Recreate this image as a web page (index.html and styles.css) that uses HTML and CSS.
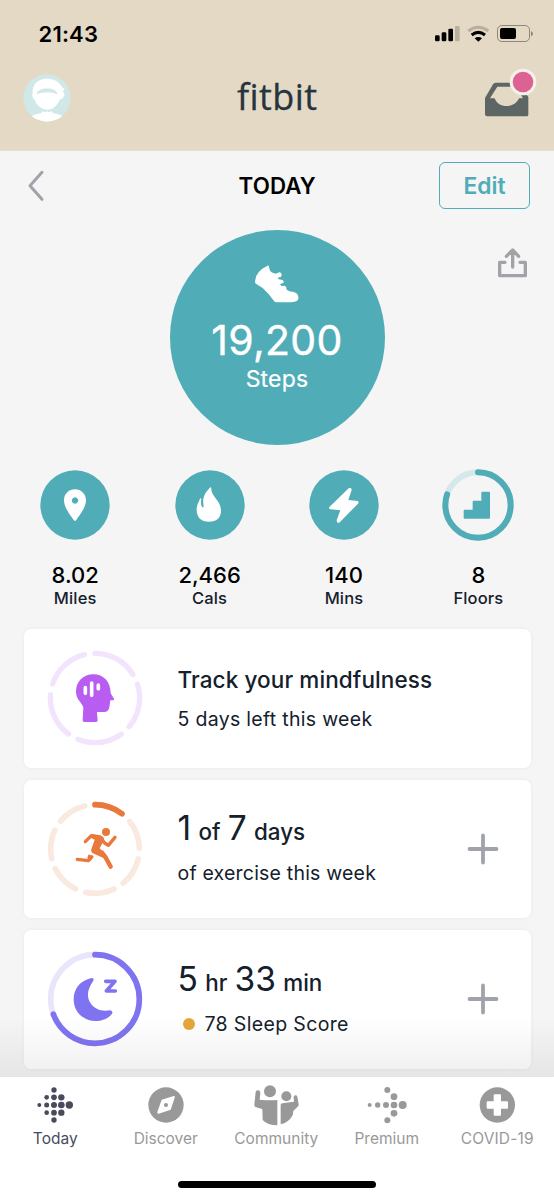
FILE: index.html
```
<!DOCTYPE html>
<html lang="en">
<head>
<meta charset="utf-8">
<title>Fitbit Today</title>
<link rel="stylesheet" href="styles.css">
</head>
<body>
<div class="app">
  <header class="header">
    <div class="status">
      <span class="clock">21:43</span>
      <svg class="status-icons" viewBox="471 66 300 69">
        <rect x="474" y="106" width="14" height="18" rx="4"/>
        <rect x="494" y="97" width="14" height="27" rx="4"/>
        <rect x="514" y="86" width="14" height="38" rx="4"/>
        <rect x="534" y="78" width="14" height="46" rx="4" fill="#b9af9e"/>
        <g fill="none" stroke-width="9">
          <path d="M574 93Q604 70 634 93" stroke="#b9af9e"/>
          <path d="M584 105Q604 89 624 105" stroke="#000"/>
        </g>
        <path d="M593 115Q604 107 615 115L604 125Z"/>
        <rect x="661.500" y="76.500" width="96" height="48" rx="13" fill="none" stroke="#8e8678" stroke-width="3"/>
        <rect x="669" y="84" width="48" height="33" rx="6"/>
        <path d="M762 93Q768 96 768 101Q768 106 762 109Z" fill="#8e8678"/>
      </svg>
    </div>
    <div class="brandbar">
      <svg class="avatar" viewBox="70 220 144 144">
        <defs><clipPath id="disc"><circle cx="142" cy="292" r="71"/></clipPath></defs>
        <circle cx="142" cy="292" r="71" fill="#d1e8e9"/>
        <g clip-path="url(#disc)">
          <path fill="#fff" d="M99 278C97 250 115 234 142 234C163 234 178 242 187 260L194 264L190 273L195 282L189 293L180 297C174 313 160 327 142 327C126 327 111 314 105 298C98 293 97 284 99 278Z"/>
          <path fill="#d1e8e9" d="M111 281C111 258 173 258 173 281C155 273 130 273 111 281Z"/>
          <path fill="#fff" d="M95 347Q108 339 124 338L128 331L135 335L142 332L149 335L156 331L160 338Q177 339 190 347L180 370H104Z"/>
        </g>
      </svg>
      <span class="brand">fitbit</span>
      <svg class="inbox" viewBox="621 201 156 147">
        <path fill="#5d6664" fill-rule="evenodd" d="M655 245H724L754 288V341Q754 346 749 346H630Q624 346 624 340V291L648 250Q651 245 655 245ZM661 257L639 292H653C662 322 712 324 726 292H738L717 257Z"/>
        <circle cx="738" cy="243" r="40" fill="#f5f0ea"/><circle cx="738" cy="243" r="31" fill="#dc6293"/>
      </svg>
    </div>
  </header>
  <main class="main">
    <div class="daybar">
      <svg class="back" viewBox="80 506 54 99"><path d="M125 516L89 556L125 597" fill="none" stroke="#a1a3a8" stroke-width="9" stroke-linecap="round" stroke-linejoin="round"/></svg>
      <h1 class="title">TODAY</h1>
      <button class="edit">Edit</button>
    </div>
    <section class="hero">
      <div class="steps">
        <svg class="shoe" viewBox="280 130 144 126"><path fill="#fff" d="M322 139Q327 135 328 142Q330 161 349 162L358 158Q366 158 366 166L364 171L354 174L357 179L369 181Q374 184 371 190L361 193L365 199L375 198Q381 200 381 210Q387 215 402 217Q415 220 416 232Q420 247 394 248H351Q346 248 343 244Q327 221 309 205L291 194Q284 190 287 180Q291 154 322 139Z"/></svg>
        <span class="steps-value">19,200</span>
        <span class="steps-label">Steps</span>
      </div>
      <svg class="share" viewBox="660 740 93 93"><path fill="none" stroke="#a1a3a8" stroke-width="10" stroke-linejoin="round" stroke-linecap="round" d="M684 786H668V826H745V786H729M707 800V751M688 768L707 749L725 768"/></svg>
    </section>
    <section class="stats">
      <div class="stat">
        <svg class="stat-icon" viewBox="58 25 216 216"><circle cx="166" cy="133" r="104" fill="#50acb7"/><path fill="#fff" fill-rule="evenodd" d="M166 86C184 86 199 100 199 119C199 141 180 162 170 178Q166 183 162 178C151 162 133 141 133 119C133 100 147 86 166 86ZM166 110A9.500 9.500 0 1 0 166.100 110Z"/></svg>
        <span class="stat-value">8.02</span><span class="stat-label">Miles</span>
      </div>
      <div class="stat">
        <svg class="stat-icon" viewBox="462 25 216 216"><circle cx="570" cy="133" r="104" fill="#50acb7"/><path fill="#fff" d="M571 80Q574 78 574 84C573 108 603 119 603 151C603 172 589 183 567 183C544 183 530 170 530 147C530 132 536 124 540 114Q544 110 544 117C542 127 543 134 547 140Q551 141 551 136C545 108 558 94 571 80Z"/></svg>
        <span class="stat-value">2,466</span><span class="stat-label">Cals</span>
      </div>
      <div class="stat">
        <svg class="stat-icon" viewBox="85 25 216 216"><circle cx="193" cy="133" r="104" fill="#50acb7"/><path fill="#fff" d="M207 83Q211 79 215 84L216 88L206 118L234 121Q239 124 235 129L181 184Q177 189 172 184L171 179L182 149L152 146Q145 143 150 138Z"/></svg>
        <span class="stat-value">140</span><span class="stat-label">Mins</span>
      </div>
      <div class="stat">
        <svg class="stat-icon" viewBox="487 25 216 216"><g fill="none" stroke-width="18" transform="rotate(-90 595 133)"><circle cx="595" cy="133" r="98" stroke="#d5e9eb"/><circle cx="595" cy="133" r="98" stroke="#50acb7" stroke-linecap="round" pathLength="360" stroke-dasharray="289 71"/></g><path fill="#50acb7" d="M608 93H628Q631 93 631 96V171Q631 174 628 174H555Q552 174 552 171V150Q552 147 555 147H579V123Q579 120 582 120H605V96Q605 93 608 93Z"/></svg>
        <span class="stat-value">8</span><span class="stat-label">Floors</span>
      </div>
    </section>
    <section class="cards">
      <article class="card">
        <svg class="ring" viewBox="79 75 288 288">
          <circle cx="223" cy="219" r="134" fill="none" stroke="#f1e4fc" stroke-width="16" stroke-linecap="round" pathLength="360" stroke-dasharray="58 14" transform="rotate(-90 223 219)"/>
          <path fill="#b85cf2" d="M218 148C248 148 270 170 270 205L280 221Q282 226 276 226H269L266 247Q264 261 250 261H229V265L231 286Q231 291 226 291H190Q186 291 186 286L188 247Q185 239 178 230C169 221 166 210 166 198C167 169 188 148 218 148Z"/>
          <path stroke="#fff" stroke-width="11" stroke-linecap="round" d="M194 188V205M213 174V211M233 180V191"/>
        </svg>
        <div class="copy"><h2 class="card-title">Track your mindfulness</h2><p class="card-sub mind-sub">5 days left this week</p></div>
      </article>
      <article class="card">
        <svg class="ring" viewBox="79 77 288 288">
          <g fill="none" stroke-width="17" stroke-linecap="round"><circle cx="223" cy="221" r="133" stroke="#fae9df" pathLength="360" stroke-dasharray="37.400 14.029" transform="rotate(-90 223 221)"/><circle cx="223" cy="221" r="133" stroke="#e9783c" pathLength="360" stroke-dasharray="37.400 322.600" transform="rotate(-90 223 221)"/></g>
          <circle cx="256" cy="170" r="12" fill="#e9783c"/>
          <g fill="none" stroke="#e9783c" stroke-linecap="round" stroke-linejoin="round">
            <path stroke-width="10" d="M194 199L212 181L238 185L252 203L263 210L283 186M170 252L203 256L213 244"/>
            <path stroke-width="13" d="M244 232L253 243L270 274"/>
          </g>
          <path fill="#e9783c" d="M213 176L244 183Q252 187 250 195L237 219L256 239L250 249L215 233Q209 229 212 222L222 193L211 188ZM204 237L219 245L209 258L200 247Z"/>
        </svg>
        <div class="copy"><h2 class="metric"><b>1</b><span>of</span><b>7</b><span>days</span></h2><p class="card-sub exercise-sub">of exercise this week</p></div>
        <svg class="plus" viewBox="0 0 32 32"><path d="M16 2.500V29.500M2.500 16H29.500" stroke="#a0a4aa" stroke-width="3.800" stroke-linecap="round"/></svg>
      </article>
      <article class="card">
        <svg class="ring" viewBox="79 79 288 288">
          <g fill="none" stroke-width="17" transform="rotate(-90 223 223)"><circle cx="223" cy="223" r="133" stroke="#e9e6fb"/><circle cx="223" cy="223" r="133" stroke="#7f73f1" stroke-linecap="round" pathLength="360" stroke-dasharray="249.500 110.500"/></g>
          <path fill="#7f73f1" d="M210 161Q219 158 219 167C199 195 197 216 210 236C222 255 244 261 268 257Q277 258 275 266C267 279 247 289 225 289C187 289 159 260 159 225C159 192 178 169 210 161Z"/>
          <path fill="none" stroke="#7f73f1" stroke-width="11" stroke-linecap="round" stroke-linejoin="round" d="M255 170H283L257 199H284"/>
        </svg>
        <div class="copy"><h2 class="metric"><b>5</b><span>hr</span><b>33</b><span>min</span></h2><p class="card-sub sleep-sub"><i class="dot"></i>78 Sleep Score</p></div>
        <svg class="plus" viewBox="0 0 32 32"><path d="M16 2.500V29.500M2.500 16H29.500" stroke="#a0a4aa" stroke-width="3.800" stroke-linecap="round"/></svg>
      </article>
    </section>
    <div class="fade"></div>
  </main>
  <nav class="nav">
    <div class="tabs">
      <a class="tab active">
        <svg class="tab-icon" viewBox="98 38 132 132"><circle cx="117" cy="104" r="6"/><circle cx="139" cy="81" r="7"/><circle cx="139" cy="104" r="7.500"/><circle cx="139" cy="127" r="7"/><circle cx="161" cy="59" r="8"/><circle cx="161" cy="81" r="8.500"/><circle cx="161" cy="104" r="9"/><circle cx="161" cy="127" r="8.500"/><circle cx="161" cy="149" r="8"/><circle cx="183" cy="81" r="9.500"/><circle cx="183" cy="104" r="10"/><circle cx="183" cy="127" r="9.500"/><circle cx="207" cy="104" r="11"/></svg>
        <span>Today</span></a>
      <a class="tab">
        <svg class="tab-icon" viewBox="432 38 132 132"><circle cx="498" cy="104" r="53"/><path fill="#fff" d="M485 88L521 77Q526 76 524 82L512 118L476 130Q471 131 472 125Z"/><circle cx="498" cy="104" r="6"/></svg>
        <span>Discover</span></a>
      <a class="tab">
        <svg class="tab-icon" viewBox="762 38 132 132"><circle cx="810" cy="63" r="18"/><path d="M763 103L767 65Q768 59 775 60Q781 61 781 68L779 88Q804 91 832 89V165Q802 165 788 149L787 116L768 111Q763 109 763 103Z"/><circle cx="859" cy="78" r="15"/><path d="M842 104Q842 99 847 99L882 94L881 82Q880 76 886 75Q890 74 892 79L896 102Q897 108 892 110L880 122L878 135Q865 158 842 162Z"/></svg>
        <span>Community</span></a>
      <a class="tab">
        <svg class="tab-icon" viewBox="264 38 132 132"><circle cx="278" cy="104" r="6"/><circle cx="302" cy="104" r="8"/><circle cx="327" cy="104" r="9"/><circle cx="351" cy="104" r="10"/><circle cx="377" cy="104" r="12"/><circle cx="331" cy="59" r="9"/><circle cx="351" cy="79" r="10"/><circle cx="351" cy="129" r="10"/><circle cx="331" cy="150" r="9"/></svg>
        <span>Premium</span></a>
      <a class="tab">
        <svg class="tab-icon" viewBox="596 38 132 132"><circle cx="663" cy="104" r="53"/><path fill="#fff" d="M655 72H671Q674 72 674 75V93H692Q695 93 695 96V112Q695 115 692 115H674V133Q674 136 671 136H655Q652 136 652 133V115H634Q631 115 631 112V96Q631 93 634 93H652V75Q652 72 655 72Z"/></svg>
        <span class="covid">COVID-19</span></a>
    </div>
    <div class="home"></div>
  </nav>
</div>
</body>
</html>
```

FILE: styles.css
```
* { box-sizing: border-box; }
body { margin: 0; font-family: Inter, "Liberation Sans", sans-serif; color: #14202c; }
h1, h2, p { margin: 0; font-weight: inherit; }
svg { display: block; flex: none; overflow: visible; }
.app { width: 554px; height: 1200px; display: flex; flex-direction: column; overflow: hidden; background: #f5f5f5; }
.header { height: 151px; flex: none; background: #e4d9c5; border-bottom: 1px solid #e7dfd5; }
.status { height: 67px; padding: 0 20px 0 38.5px; display: flex; align-items: center; justify-content: space-between; }
.clock { font-size: 22px; line-height: 26px; font-weight: 600; color: #000; letter-spacing: 0.2px; }
.status-icons { width: 100px; height: 23px; }
.brandbar { height: 62px; padding: 0 18px 0 23px; display: grid; grid-template-columns: 1fr auto 1fr; align-items: center; }
.avatar { width: 48px; height: 48px; }
.brand { font-family: "Open Sans", sans-serif; font-size: 36px; line-height: 60px; margin-top: -2px; padding-right: 4.5px; color: #25343f; font-variant-ligatures: none; letter-spacing: 0.4px; -webkit-text-stroke: 0.3px #25343f; }
.inbox { width: 52px; height: 49px; justify-self: end; margin-top: -12px; }
.main { position: relative; height: 926px; flex: none; overflow: hidden; }
.daybar { height: 69px; padding: 0 24px 0 26.5px; display: grid; grid-template-columns: 1fr auto 1fr; align-items: center; }
.back { width: 18px; height: 33px; }
.title { font-size: 22.300px; line-height: 27px; padding-right: 2px; font-weight: 600; color: #000; letter-spacing: 0.1px; }
.edit { justify-self: end; width: 91px; height: 47px; padding: 0; border: 1.5px solid #50acb7; border-radius: 6px; background: transparent; color: #50acb7; font: 600 22.800px Inter, sans-serif; }
.hero { height: 235px; padding: 10px 26px 0; display: grid; grid-template-columns: 1fr 215px 1fr; align-items: start; }
.steps { grid-column: 2; width: 215px; height: 215px; border-radius: 50%; background: #50acb7; color: #fff; display: flex; flex-direction: column; align-items: center; padding-top: 33px; }
.shoe { width: 48px; height: 42px; }
.steps-value { font-size: 41px; line-height: 50px; margin-top: 10px; letter-spacing: 0.3px; -webkit-text-stroke: 0.4px #fff; }
.steps-label { font-size: 23px; line-height: 28px; letter-spacing: 0.2px; -webkit-text-stroke: 0.2px #fff; }
.share { width: 31px; height: 31px; justify-self: end; margin-top: 16.500px; }
.stats { padding: 13.500px 8px 0; height: 174px; display: grid; grid-template-columns: repeat(4, 134.400px); }
.stat { display: flex; flex-direction: column; align-items: center; }
.stat-icon { width: 72px; height: 72px; }
.stat-value { font-size: 22px; line-height: 26px; font-weight: 500; color: #000; margin-top: 21px; }
.stat-label { font-size: 16.500px; line-height: 20px; font-weight: 500; margin-top: 0.500px; letter-spacing: 0.15px; }
.cards { padding: 0 23.500px; display: flex; flex-direction: column; gap: 12px; }
.card { height: 138.500px; background: #fff; border-radius: 7px; box-shadow: 0 0 4px rgba(0, 0, 0, .05); display: flex; align-items: center; padding: 0 31.500px 0 23px; }
.ring { width: 96px; height: 96px; }
.copy { margin-left: 35px; flex: 1; white-space: nowrap; }
.card-title { font-size: 22.500px; line-height: 32px; font-weight: 500; letter-spacing: 0.1px; }
.card-sub { font-size: 19.500px; line-height: 26px; }
.mind-sub { margin-top: 10px; letter-spacing: 0.300px; }
.exercise-sub { margin-top: 7px; margin-bottom: 4px; letter-spacing: 0.200px; }
.sleep-sub { display: flex; align-items: center; margin-top: 7px; margin-bottom: 3px; letter-spacing: 0.350px; }
.metric { display: flex; align-items: baseline; gap: 7.300px; line-height: 42px; font-size: 22.400px; font-weight: 500; }
.metric b { font-size: 33.500px; font-weight: 400; }
.dot { width: 12px; height: 12px; border-radius: 50%; background: #e5a639; margin: 0 10px 0 5px; }
.plus { width: 32px; height: 32px; }
.fade { position: absolute; left: 0; right: 0; bottom: 0; height: 60px; background: linear-gradient(rgba(30, 30, 40, 0), rgba(30, 30, 40, .07)); }
.nav { flex: 1; background: #fff; display: flex; flex-direction: column; align-items: center; }
.tabs { width: 554px; height: 104px; padding: 5.500px 1.500px 0 0; display: grid; grid-template-columns: repeat(5, 1fr); }
.tab { min-width: 0; display: flex; flex-direction: column; align-items: center; color: #999; font-size: 15.500px; line-height: 20px; white-space: nowrap; }
.tab-icon { width: 44px; height: 44px; fill: #999; margin-bottom: 2px; }
.active { color: #484b5c; }
.active .tab-icon { fill: #484b5c; }
.covid { letter-spacing: 0.150px; }
.home { width: 198px; height: 7px; border-radius: 4px; background: #000; }
```
